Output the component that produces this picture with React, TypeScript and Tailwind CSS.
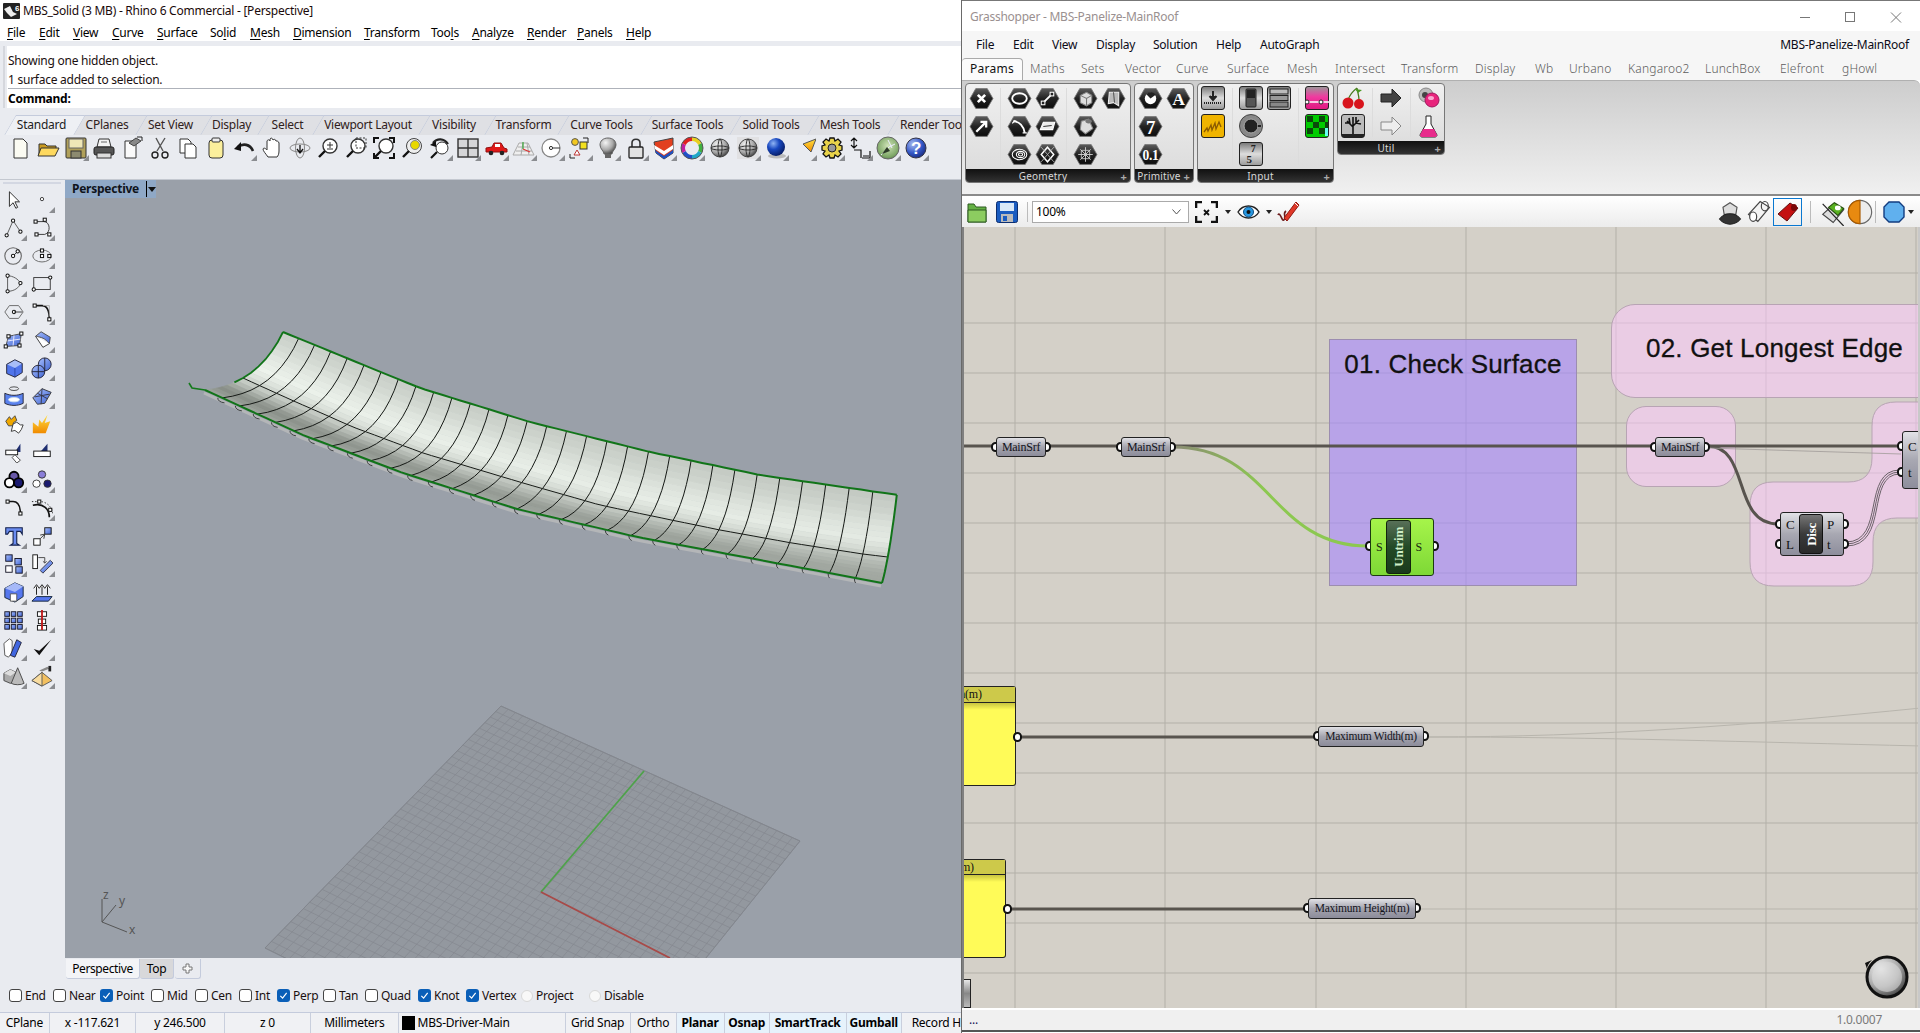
import React from 'react';

const ui = "font-['Noto_Sans','Open_Sans',sans-serif] tracking-[-0.25px]";
const serif = "font-['Liberation_Serif',serif]";

type Pt = [number, number];

// ---- rhino surface maths ----
const topPts: Pt[] = [[283, 332], [420, 388], [530, 422], [650, 452], [760, 475], [898, 495]];
const midPts: Pt[] = [[243, 378], [287, 398], [353, 427], [423, 453], [523, 483], [600, 505], [652, 516], [720, 530], [792, 543], [863, 554], [888, 557]];
const botPts: Pt[] = [[205, 390], [303, 435], [403, 473], [517, 509], [637, 537], [760, 560], [882, 583]];
const RIBS = 31;

const yAt = (pts: Pt[], x: number) => {
  for (let i = 0; i < pts.length - 1; i++) {
    if (x <= pts[i + 1][0]) {
      const t = (x - pts[i][0]) / (pts[i + 1][0] - pts[i][0]);
      return pts[i][1] + (pts[i + 1][1] - pts[i][1]) * t;
    }
  }
  return pts[pts.length - 1][1];
};

const topAt = (i: number): Pt => {
  const x = 283 + 15.5 * i + (4.3 * i * i) / RIBS;
  return [x, yAt(topPts, x)];
};
const midAt = (i: number): Pt => {
  const x = 243 + 16.5 * i + (4.3 * i * i) / RIBS;
  return [x, yAt(midPts, x)];
};
const botAt = (i: number): Pt => {
  const x = 205 + 17 * i + (4.84 * i * i) / RIBS;
  return [x, yAt(botPts, x)];
};

const surf = (i: number, v: number): Pt => {
  const T = topAt(i);
  const M = midAt(i);
  const B = botAt(i);
  const c = (k: 0 | 1) => (M[k] - 0.16 * T[k] - 0.36 * B[k]) / 0.48;
  const w0 = (1 - v) * (1 - v);
  const w1 = 2 * v * (1 - v);
  const w2 = v * v;
  return [w0 * T[0] + w1 * c(0) + w2 * B[0], w0 * T[1] + w1 * c(1) + w2 * B[1]];
};

const shade = (u: number, v: number) => {
  // bright band drifts towards the top edge on the far end
  const stops: Pt[] = [[0, 205], [0.12, 214], [0.28, 232], [0.42, 240], [0.55, 222], [0.66, 196], [0.84, 138 + 38 * u], [1, 164 + 8 * u]];
  let g = 200;
  for (let k = 0; k < stops.length - 1; k++) {
    if (v <= stops[k + 1][0]) {
      g = stops[k][1] + ((stops[k + 1][1] - stops[k][1]) * (v - stops[k][0])) / (stops[k + 1][0] - stops[k][0]);
      break;
    }
  }
  g = g - 8 * u;
  return `rgb(${Math.round(g - 4)},${Math.round(g + 2)},${Math.round(g - 5)})`;
};

const toPath = (pts: Pt[]) => pts.map((p, i) => `${i ? 'L' : 'M'}${p[0].toFixed(1)} ${p[1].toFixed(1)}`).join(' ');

const Surface = () => {
  const quads: React.ReactNode[] = [];
  const steps = 18;
  for (let i = 0; i < RIBS; i++) {
    for (let j = 0; j < steps; j++) {
      const a = surf(i, j / steps);
      const b = surf(i + 1, j / steps);
      const c = surf(i + 1, (j + 1) / steps);
      const d = surf(i, (j + 1) / steps);
      const col = shade(i / RIBS, (j + 0.5) / steps);
      quads.push(<path key={`${i}-${j}`} d={toPath([a, b, c, d]) + 'Z'} fill={col} stroke={col} strokeWidth={0.6} />);
    }
  }
  const ribs: string[] = [];
  for (let i = 1; i < RIBS; i++) {
    const pts: Pt[] = [];
    for (let v = 0; v <= 10; v++) pts.push(surf(i, v / 10));
    ribs.push(toPath(pts));
  }
  const long: Pt[] = [];
  const top: Pt[] = [];
  const bot: Pt[] = [];
  for (let i = 0; i <= RIBS; i += 0.5) {
    long.push(midAt(i));
    top.push(topAt(i));
    bot.push(botAt(i));
  }
  const left: Pt[] = [];
  const right: Pt[] = [];
  for (let v = 0; v <= 10; v++) {
    left.push(surf(0, v / 10));
    right.push(surf(RIBS, v / 10));
  }
  const hooks: string[] = [];
  for (let i = 1; i < RIBS; i++) {
    const [x, y] = botAt(i);
    const k = 3.5 * (1 - i / RIBS);
    hooks.push(`M${x - 1 - k} ${y} Q${x - 1 - k} ${y + 4} ${x + k * 0.7} ${y + 5}`);
  }
  return (
    <g fill="none">
      <path d={toPath(bot.map((p) => [p[0] - 1, p[1] + 3] as Pt))} stroke="#b4b6b8" strokeWidth={3} />
      {hooks.map((d, i) => <path key={i} d={d} stroke="#3c3f41" strokeWidth={1} />)}
      {quads}
      {ribs.map((d, i) => <path key={i} d={d} stroke="#161a16" strokeWidth={1} />)}
      <path d={toPath(long)} stroke="#161a16" strokeWidth={1} />
      <path d="M189 383 L192 388 L205 390" stroke="#147a1c" strokeWidth={1.6} />
      <path d={toPath(top)} stroke="#117419" strokeWidth={2} />
      <path d={toPath(bot)} stroke="#117419" strokeWidth={2} />
      <path d={toPath(left.slice(0, 8))} stroke="#117419" strokeWidth={1.8} />
      <path d={toPath(right)} stroke="#117419" strokeWidth={2} />
    </g>
  );
};

const CPlaneGrid = () => {
  const [x0, y0, x1, y1, x2, y2, x3, y3] = [501, 706, 800, 841, 587, 1106, 265, 948];
  const dx1 = x1 - x2, dx2 = x3 - x2, dx3 = x0 - x1 + x2 - x3;
  const dy1 = y1 - y2, dy2 = y3 - y2, dy3 = y0 - y1 + y2 - y3;
  const det = dx1 * dy2 - dx2 * dy1;
  const g = (dx3 * dy2 - dx2 * dy3) / det;
  const h = (dx1 * dy3 - dx3 * dy1) / det;
  const a = x1 - x0 + g * x1, b = x3 - x0 + h * x3;
  const d = y1 - y0 + g * y1, e = y3 - y0 + h * y3;
  const map = (s: number, t: number): Pt => {
    const w = g * s + h * t + 1;
    return [(a * s + b * t + x0) / w, (d * s + e * t + y0) / w];
  };
  const lines: string[] = [];
  for (let i = 0; i <= 40; i++) {
    lines.push(toPath([map(i / 40, 0), map(i / 40, 1)]));
    lines.push(toPath([map(0, i / 40), map(1, i / 40)]));
  }
  return (
    <g>
      <path d={toPath([map(0, 0), map(1, 0), map(1, 1), map(0, 1)]) + 'Z'} fill="#93989f" stroke="#7d8188" strokeWidth={0.8} />
      {lines.map((l, i) => <path key={i} d={l} fill="none" stroke="#83878e" strokeWidth={0.65} />)}
      <path d="M541 892 L644 771" stroke="#4ea24a" strokeWidth={1.8} />
      <path d="M541 892 L670 958" stroke="#a84a48" strokeWidth={1.8} />
    </g>
  );
};

// ---- icon helpers ----
const Svg = ({ s = 24, children }: { s?: number; children: React.ReactNode }) => (
  <svg width={s} height={s} viewBox="0 0 24 24" className="block">{children}</svg>
);

const Corner = () => (
  <span className="absolute bottom-[1px] right-[1px] w-0 h-0 border-l-[6px] border-l-transparent border-b-[6px] border-b-[#8b8d91]" />
);

const Defs = () => (
  <svg className="absolute w-0 h-0">
    <defs>
      <radialGradient id="ball" cx="35%" cy="30%" r="75%"><stop offset="0" stopColor="#f4f4f4" /><stop offset="0.6" stopColor="#a8a8a8" /><stop offset="1" stopColor="#404040" /></radialGradient>
      <radialGradient id="blueball" cx="35%" cy="30%" r="75%"><stop offset="0" stopColor="#8fb4f4" /><stop offset="0.45" stopColor="#1848c0" /><stop offset="1" stopColor="#061a60" /></radialGradient>
      <radialGradient id="greenball" cx="50%" cy="40%" r="70%"><stop offset="0" stopColor="#cfe3b8" /><stop offset="0.7" stopColor="#7fa868" /><stop offset="1" stopColor="#4d6d45" /></radialGradient>
      <radialGradient id="helpball" cx="35%" cy="30%" r="75%"><stop offset="0" stopColor="#a8bcf0" /><stop offset="0.6" stopColor="#3458c8" /><stop offset="1" stopColor="#1a2c80" /></radialGradient>
      <linearGradient id="hex" x1="0" y1="0" x2="0" y2="1"><stop offset="0" stopColor="#5a5a5a" /><stop offset="0.5" stopColor="#222" /><stop offset="1" stopColor="#0c0c0c" /></linearGradient>
      <linearGradient id="blue" x1="0" y1="0" x2="1" y2="1"><stop offset="0" stopColor="#a8c0ff" /><stop offset="1" stopColor="#3f63d0" /></linearGradient>
      <linearGradient id="sq" x1="0" y1="0" x2="0" y2="1"><stop offset="0" stopColor="#777" /><stop offset="0.5" stopColor="#ddd" /><stop offset="1" stopColor="#999" /></linearGradient>
      <linearGradient id="pink" x1="0" y1="0" x2="0" y2="1"><stop offset="0" stopColor="#999" /><stop offset="0.45" stopColor="#f03aa0" /><stop offset="1" stopColor="#e01880" /></linearGradient>
      <linearGradient id="org" x1="0" y1="0" x2="0" y2="1"><stop offset="0" stopColor="#ffe040" /><stop offset="1" stopColor="#f08a00" /></linearGradient>
      <linearGradient id="wireGreen" gradientUnits="userSpaceOnUse" x1="1172" y1="0" x2="1262" y2="0"><stop offset="0" stopColor="#8a8a74" /><stop offset="1" stopColor="#8cc850" /></linearGradient>
    </defs>
  </svg>
);

const Mag = ({ children }: { children?: React.ReactNode }) => (
  <>
    <circle cx="14" cy="10" r="7" fill="#fff" stroke="#333" strokeWidth="1.4" />
    <path d="M9 15 L3 21" stroke="#111" strokeWidth="2.4" />
    {children}
  </>
);

const Sphere = () => (
  <>
    <circle cx="12" cy="12" r="9" fill="url(#ball)" stroke="#444" />
    <ellipse cx="12" cy="12" rx="9" ry="2" fill="none" stroke="#333" />
    <ellipse cx="12" cy="12" rx="2" ry="9" fill="none" stroke="#333" />
  </>
);

const topIcons: Record<string, React.ReactNode> = {
  newf: <path d="M6 3h9l4 4v15H6z" fill="#fbfbf2" stroke="#333" />,
  open: <><path d="M3 20V8h6l2 2h9v3" fill="#c99a20" stroke="#333" /><path d="M2 20l3-8h18l-4 8z" fill="#fdd85e" stroke="#333" /></>,
  save: <><rect x="2" y="2" width="20" height="20" rx="1" fill="#b0a05a" stroke="#333" /><rect x="5" y="3" width="14" height="9" fill="#efe7b6" stroke="#666" /><rect x="7" y="15" width="10" height="7" fill="#8c8a70" stroke="#333" /></>,
  print: <><path d="M7 3h10l2 8H5z" fill="#f2f2f2" stroke="#333" /><rect x="2" y="11" width="20" height="8" rx="2" fill="#555" stroke="#222" /><rect x="5" y="17" width="14" height="5" fill="#ddd" stroke="#333" /><path d="M9 6h6" stroke="#666" /></>,
  props: <><path d="M5 5h11v17H5z" fill="#fafafa" stroke="#333" /><path d="M9 7 L16 2 L21 5 L14 10z" fill="#888" stroke="#444" /><path d="M17 1h5v4" fill="none" stroke="#222" /></>,
  cut: <><path d="M8 2 L15 15 M17 2 L9 15" stroke="#555" strokeWidth="1.4" fill="none" /><circle cx="7" cy="19" r="3" fill="none" stroke="#222" strokeWidth="1.4" /><circle cx="17" cy="19" r="3" fill="none" stroke="#222" strokeWidth="1.4" /></>,
  copy: <><path d="M4 3h8l3 3v11H4z" fill="#fff" stroke="#333" /><path d="M9 8h8l3 3v11H9z" fill="#fff" stroke="#333" /></>,
  paste: <><rect x="5" y="4" width="14" height="18" rx="3" fill="#fbef9c" stroke="#333" /><rect x="8" y="2" width="8" height="4" rx="1" fill="#eee" stroke="#333" /></>,
  undo: <><path d="M21 15 C18 8 11 7 6 11" fill="none" stroke="#222" strokeWidth="2.6" /><path d="M2 13 L9 6 L9 15z" fill="#111" /></>,
  pan: <path d="M8 21 C6 18 3 15 3 13 C4 11 6 13 7 14 V5 C8 3 9.5 4 10 5 V3 C11 1.5 12.5 2 13 4 C14 3 15.5 3 16 5 C17 5 18.5 5 19 7 V15 C19 18 18 20 17 21z" fill="#fff" stroke="#333" />,
  orbit: <><ellipse cx="12" cy="12" rx="4.5" ry="10" fill="none" stroke="#888" /><ellipse cx="12" cy="12" rx="10" ry="4" fill="none" stroke="#888" /><path d="M12 9v7M9 13l3 4 3-4" stroke="#111" fill="none" strokeWidth="1.3" /></>,
  zoomin: <Mag><path d="M11 9h6M14 6v6M11 13h6" stroke="#333" /></Mag>,
  zoomwin: <><Mag /><rect x="12" y="2" width="10" height="10" fill="none" stroke="#333" strokeDasharray="2 1.5" /></>,
  zoomext: <><Mag /><path d="M2 7V2h5M17 2h5v5M22 17v5h-5M7 22H2v-5" fill="none" stroke="#111" strokeWidth="2" /></>,
  zoomsel: <><circle cx="14" cy="10" r="7.5" fill="#eee" stroke="#444" /><circle cx="15" cy="9" r="4.5" fill="#e8d800" stroke="#888" /><path d="M9 15 L3 21" stroke="#111" strokeWidth="2.4" /></>,
  zoomback: <><circle cx="14" cy="12" r="6" fill="#fff" stroke="#333" /><path d="M9 16 L3 22" stroke="#111" strokeWidth="2.2" /><path d="M20 8 C16 2 9 2 5 7" fill="none" stroke="#222" strokeWidth="2.2" /><path d="M2 9l6-4 0 6z" fill="#111" /></>,
  four: <><rect x="2" y="3" width="20" height="18" fill="#d6d6d8" stroke="#333" strokeWidth="1.4" /><path d="M12 3v18M2 12h20" stroke="#333" strokeWidth="1.4" /></>,
  car: <><path d="M2 16v-4l6-1 2-4h7l3 5 3 1v3z" fill="#e01818" stroke="#901010" /><rect x="11" y="8" width="5" height="3" fill="#fff" /><circle cx="7" cy="17" r="2.3" fill="#222" /><circle cx="18" cy="17" r="2.3" fill="#222" /></>,
  cplane: <><path d="M7 7h9l6 12H1z" fill="#efefef" stroke="#aaa" /><path d="M6 11h12M4 15h16M11 7l-2 12M15 7l2 12" stroke="#aaa" /><path d="M11 13V6" stroke="#4a4" strokeWidth="1.3" /><path d="M11 13l7 3" stroke="#d33" strokeWidth="1.3" /></>,
  circ: <><circle cx="11" cy="12" r="9" fill="#fff" stroke="#888" strokeWidth="1.3" /><circle cx="11" cy="12" r="1.6" fill="#fff" stroke="#333" /><path d="M13 12h7" stroke="#333" /></>,
  shapes: <><path d="M15 2h5v5M2 18v4h5" fill="none" stroke="#222" /><circle cx="7" cy="6" r="3.4" fill="#f2c820" stroke="#555" /><rect x="12" y="6" width="7" height="7" fill="#f2e020" stroke="#333" /><path d="M9 14l3 5H6z" fill="#fff" stroke="#b33" /></>,
  bulb: <><path d="M12 2c5 0 8 3 8 7s-4 6-4 9H8c0-3-4-5-4-9s3-7 8-7z" fill="url(#ball)" stroke="#666" /><rect x="9" y="18" width="6" height="4" fill="#666" /></>,
  lock: <><path d="M8 11V7c0-5 8-5 8 0v4" fill="none" stroke="#333" strokeWidth="1.6" /><rect x="5" y="11" width="14" height="11" rx="1" fill="#e2e2e2" stroke="#222" strokeWidth="1.3" /></>,
  paint: <><path d="M2 6 L21 2 V17 L12 23 L4 17z" fill="#e24020" stroke="#444" /><path d="M2 9 L12 15 L21 9 V13 L12 19 L3 13z" fill="#fff" /><path d="M3 14 L12 20 L21 14 V17 L12 23 L4 17z" fill="#2050c0" /></>,
  wheel: <><path d="M12 3a9 9 0 0 1 8 5" fill="none" stroke="#e8d020" strokeWidth="4" /><path d="M20 8a9 9 0 0 1 0 8" fill="none" stroke="#40b040" strokeWidth="4" /><path d="M20 16a9 9 0 0 1-8 5" fill="none" stroke="#20a8c8" strokeWidth="4" /><path d="M12 21a9 9 0 0 1-8-5" fill="none" stroke="#2050c8" strokeWidth="4" /><path d="M4 16a9 9 0 0 1 0-8" fill="none" stroke="#c020a0" strokeWidth="4" /><path d="M4 8a9 9 0 0 1 8-5" fill="none" stroke="#e02020" strokeWidth="4" /><circle cx="12" cy="12" r="11" fill="none" stroke="#555" /></>,
  sphere: <Sphere />,
  spheregrid: <><rect x="1" y="1" width="22" height="22" fill="#ddd" opacity="0.7" /><Sphere /></>,
  bluesphere: <><ellipse cx="13" cy="20" rx="9" ry="2.5" fill="#bbb" /><circle cx="12" cy="11" r="9" fill="url(#blueball)" /></>,
  cone: <path d="M11 8 L24 3 L19 16z" fill="url(#org)" stroke="#555" />,
  gear: <><path d="M10 2h4l1 3 3-2 3 3-2 3 3 1v4l-3 1 2 3-3 3-3-2-1 3h-4l-1-3-3 2-3-3 2-3-3-1v-4l3-1-2-3 3-3 3 2z" fill="#e8d24a" stroke="#111" strokeWidth="1.3" /><circle cx="12" cy="12" r="4" fill="#999" stroke="#222" /></>,
  dim: <path d="M6 2v10M3 5l3-3 3 3M3 9l3 3 3-3M6 14h7v8M13 14l0 0M14 22h8v-7M15 20h6" fill="none" stroke="#111" strokeWidth="1.2" />,
  greenb: <><circle cx="12" cy="12" r="11" fill="url(#greenball)" stroke="#666" /><path d="M5 19 L13 11 L19 8 M12 4 L16 12" stroke="#eef" fill="none" /><path d="M6 18 L11 11 L14 15 Z" fill="#2c3a28" /></>,
  help: <><circle cx="12" cy="12" r="10" fill="url(#helpball)" stroke="#334" /><text x="12" y="18" textAnchor="middle" fontSize="17" fontWeight="700" fontFamily="Liberation Sans" fill="#fff">?</text></>,
};

const topRow: [string, boolean][] = [
  ['newf', false], ['open', false], ['save', true], ['print', false], ['props', false], ['cut', false], ['copy', false], ['paste', false],
  ['undo', true], ['pan', false], ['orbit', false], ['zoomin', false], ['zoomwin', false], ['zoomext', false], ['zoomsel', false], ['zoomback', true],
  ['four', true], ['car', true], ['cplane', true], ['circ', true], ['shapes', true], ['bulb', true], ['lock', true], ['paint', true], ['wheel', true],
  ['sphere', false], ['spheregrid', true], ['bluesphere', true], ['cone', true], ['gear', true], ['dim', true], ['greenb', true], ['help', true],
];

const node = (x: number, y: number, r = 1.8) => <circle cx={x} cy={y} r={r} fill="#fff" stroke="#111" strokeWidth="1.1" />;
const sq = (x: number, y: number, s = 3.4) => <rect x={x - s / 2} y={y - s / 2} width={s} height={s} fill="#fff" stroke="#111" strokeWidth="1.1" />;

const leftIcons: React.ReactNode[] = [
  <path d="M7 3 L7 19 L11 15 L14 21 L16 20 L13 14 L18 14z" fill="#fff" stroke="#222" />,
  <circle cx="12" cy="11" r="1.8" fill="#fff" stroke="#333" />,
  <><path d="M4 20 L11 4 L19 16" fill="none" stroke="#555" />{node(4, 20)}{node(11, 4)}{node(19, 16)}</>,
  <><path d="M6 5h8c7 0 8 12 1 14H6" fill="none" stroke="#333" />{sq(5, 5)}{sq(15, 3)}{sq(20, 19)}{sq(6, 19)}</>,
  <><circle cx="11" cy="12" r="9" fill="none" stroke="#666" strokeWidth="1.2" /><path d="M11 12l5-5" stroke="#222" />{node(11, 12)}{node(16, 7)}</>,
  <><ellipse cx="12" cy="12" rx="10" ry="6.5" fill="none" stroke="#666" />{sq(12, 12)}{sq(20, 12)}{sq(12, 6)}</>,
  <><path d="M5 3 L5 20 C12 20 18 16 19 11 C17 7 11 3 5 3z" fill="none" stroke="#555" />{node(5, 3)}{node(5, 20)}{node(19, 11)}</>,
  <><rect x="3" y="5" width="18" height="13" fill="none" stroke="#333" />{node(3, 18)}{node(21, 5)}</>,
  <><path d="M7 5h10l5 7-5 7H7l-5-7z" fill="none" stroke="#666" />{node(12, 12)}<path d="M12 12h9" stroke="#333" /></>,
  <><path d="M4 5h8c5 0 8 5 8 15" fill="none" stroke="#111" strokeWidth="1.8" /><path d="M13 5h7v12" fill="none" stroke="#aaa" />{sq(4, 5)}{sq(20, 20)}</>,
  <><path d="M6 8 L20 5 L18 18 L3 19z" fill="url(#blue)" stroke="#444" /><path d="M12 7 L11 18 M5 13 L19 11" stroke="#eef" />{sq(6, 8)}{sq(20, 5)}{sq(18, 18)}{sq(3, 19)}</>,
  <><path d="M5 8 L11 3 L21 9 L20 16 C15 10 12 9 5 8z" fill="url(#blue)" stroke="#444" /><path d="M5 8 L13 20 L20 16" fill="#fff" stroke="#333" /></>,
  <><path d="M4 8 L13 3 L21 7 V17 L13 22 L4 18z" fill="#4f74ea" /><path d="M4 8 L13 12 L21 7 L13 3z" fill="#a8bdf8" /><path d="M13 12V22" stroke="#2c46a8" /><path d="M4 8 L13 3 L21 7 V17 L13 22 L4 18z" fill="none" stroke="#223" /></>,
  <><circle cx="15" cy="8" r="7" fill="url(#blue)" stroke="#223" /><circle cx="8" cy="16" r="7" fill="url(#blue)" stroke="#223" /><path d="M8 9v14M1 16h14M15 1v14" stroke="#223" fill="none" /></>,
  <><ellipse cx="12" cy="4" rx="5" ry="2" fill="none" stroke="#444" /><path d="M2 9c6 3 14 3 20 0v11c-6 3-14 3-20 0z" fill="#5a82ee" stroke="#223" /><ellipse cx="12" cy="16" rx="6" ry="2.4" fill="#fff" stroke="#cde" /></>,
  <><path d="M2 14 L12 4 L22 8 L15 20 L7 21z" fill="url(#blue)" stroke="#333" /><path d="M7 9 L18 15 M12 4 L11 21 M4 13 L20 10" stroke="#334" fill="none" /></>,
  <><path d="M3 9 L7 4 L9 7 L13 3 L15 8 L11 11 L12 14 L6 14z" fill="#f0a800" stroke="#444" /><path d="M11 12 L15 10 L19 13 L22 13 L20 18 L17 22 L13 19 L9 20z" fill="#fff" stroke="#333" /></>,
  <path d="M18 2 L15 11 L21 9 L16 22 L2 22 V10 L8 15 L9 7 L12 11z" fill="url(#org)" />,
  <><path d="M13 12 L19 3 V12z" fill="#1f2e70" /><rect x="3" y="10" width="13" height="5" fill="#fff" stroke="#111" /><path d="M13 15 L19 21 L15 24 L10 18z" fill="#fff" stroke="#444" /></>,
  <><path d="M11 11 L18 3 V11z" fill="#1f2e70" /><rect x="3" y="11" width="18" height="6" fill="#fff" stroke="#111" /></>,
  <><circle cx="12" cy="8" r="5" fill="#6858a8" stroke="#000" strokeWidth="2" /><circle cx="7" cy="15" r="5" fill="#fff" stroke="#000" strokeWidth="2" /><circle cx="17" cy="15" r="5" fill="#1a1a70" stroke="#000" strokeWidth="2" /></>,
  <><circle cx="12" cy="6" r="4" fill="#8a7ed8" stroke="#333" /><circle cx="6" cy="16" r="4" fill="#fff" stroke="#333" /><circle cx="18" cy="16" r="4" fill="#1a1a70" stroke="#333" /></>,
  <><path d="M5 5h6c6 0 8 7 8 14" fill="none" stroke="#111" strokeWidth="1.6" />{sq(5, 5)}{sq(19, 18)}</>,
  <><path d="M2 9 C14 6 20 14 20 22" fill="none" stroke="#111" strokeWidth="1.8" /><path d="M1 5h10 c8 1 13 8 13 15" fill="none" stroke="#222" strokeDasharray="1.5 2" />{sq(9, 5)}{sq(21, 14)}</>,
  <path d="M3 3h18v7l-2-3h-4l0 13 3 2H8l3-2 0-13H7l-2 3H3z" fill="#6a8cf0" stroke="#16224c" strokeWidth="1.2" />,
  <><rect x="3" y="15" width="7" height="7" fill="#fff" stroke="#111" /><rect x="15" y="3" width="7" height="7" fill="url(#blue)" stroke="#111" /><path d="M10 15l5-5M10 11l5-1-1 5" fill="none" stroke="#333" /></>,
  <><rect x="3" y="2" width="7" height="7" fill="url(#blue)" stroke="#112" /><rect x="13" y="6" width="7" height="7" fill="url(#blue)" stroke="#112" /><rect x="3" y="14" width="7" height="7" fill="#fff" stroke="#112" /><rect x="14" y="15" width="7" height="7" fill="url(#blue)" stroke="#112" /></>,
  <><rect x="2" y="2" width="5" height="15" fill="#fff" stroke="#111" /><path d="M10 19 L21 8 L24 11 L13 22z" fill="url(#blue)" stroke="#334" /><path d="M8 5h7v6M13 9l2 2 2-2" fill="none" stroke="#444" /></>,
  <><path d="M2 8 L13 2 L22 6 V17 L13 23 L2 18z" fill="#5577ee" stroke="#123" /><path d="M2 8 L13 12 L22 6 L13 2z" fill="#a6b9f8" /><path d="M8 22 V14 H15 V22z" fill="#fff" stroke="#555" /></>,
  <><path d="M1 22 L6 17 H23 L19 22z" fill="#5577ee" stroke="#123" /><path d="M6 15V6M3 8l3-4 3 4M12 15V6M9 8l3-4 3 4M18 15V6M15 8l3-4 3 4" fill="#fff" stroke="#111" /></>,
  <>{[3, 10, 17].map((y) => [2, 9, 16].map((x) => <rect key={`${x}${y}`} x={x} y={y} width="5" height="5" fill="url(#blue)" stroke="#112" />))}</>,
  <><rect x="7" y="3" width="10" height="5" fill="#fff" stroke="#111" /><rect x="8" y="11" width="8" height="5" fill="#fff" stroke="#111" /><rect x="7" y="18" width="10" height="5" fill="#fff" stroke="#111" /><path d="M12 1v22" stroke="#c01818" strokeWidth="2" /></>,
  <><path d="M1 7 L7 2 L10 4 V17 L6 22 L2 20z" fill="#fff" stroke="#555" /><path d="M8 20 L15 3 L20 6 L13 22z" fill="#4066e0" stroke="#223" /></>,
  <path d="M3 13 L9 20 L22 3 L9 15z" fill="#111" />,
  <><path d="M1 9 L8 5 L14 8 V17 L8 20 L1 17z" fill="#aaa" stroke="#444" /><path d="M1 9 L8 12 L14 8 L8 5z" fill="#ddd" /><path d="M16 3 L23 20 C20 22 12 22 9 20z" fill="#bbb" stroke="#444" /></>,
  <><path d="M12 8 L23 17 L12 23 L1 17z" fill="#f2c060" stroke="#555" /><path d="M12 8 L12 23 L1 17z" fill="#f8dca0" stroke="#555" /><path d="M9 6 L18 2 L20 4 L12 7z" fill="#888" /><rect x="19" y="1" width="3" height="6" fill="#222" /></>,
];
const leftCorner = [0, 1, 1, 1, 1, 1, 1, 1, 1, 1, 0, 1, 1, 1, 1, 1, 0, 0, 0, 0, 1, 1, 0, 1, 1, 1, 1, 1, 1, 1, 1, 1, 1, 1, 1, 1];

// ---- rhino side ----
const Ul = ({ t, i }: { t: string; i: number }) => (
  <>{t.slice(0, i)}<span className="underline underline-offset-[2px]">{t[i]}</span>{t.slice(i + 1)}</>
);

const rhinoMenu: [string, number, string][] = [
  ['File', 0, 'w-[32px]'], ['Edit', 0, 'w-[34px]'], ['View', 0, 'w-[39px]'], ['Curve', 0, 'w-[45px]'], ['Surface', 0, 'w-[53px]'], ['Solid', 2, 'w-[40px]'], ['Mesh', 0, 'w-[43px]'],
  ['Dimension', 0, 'w-[71px]'], ['Transform', 0, 'w-[67px]'], ['Tools', 3, 'w-[41px]'], ['Analyze', 0, 'w-[55px]'], ['Render', 0, 'w-[50px]'], ['Panels', 0, 'w-[49px]'], ['Help', 0, 'w-[40px]'],
];

const rhinoTabs: [string, string][] = [
  ['Standard', 'w-[69px]'], ['CPlanes', 'w-[62px]'], ['Set View', 'w-[65px]'], ['Display', 'w-[57px]'], ['Select', 'w-[55px]'], ['Viewport Layout', 'w-[106px]'], ['Visibility', 'w-[66px]'],
  ['Transform', 'w-[73px]'], ['Curve Tools', 'w-[83px]'], ['Surface Tools', 'w-[89px]'], ['Solid Tools', 'w-[78px]'], ['Mesh Tools', 'w-[80px]'], ['Render Tools', 'w-[90px]'],
];

const osnaps: [string, number, string][] = [
  ['End', 0, 'w-[44px]'], ['Near', 0, 'w-[47px]'], ['Point', 1, 'w-[51px]'], ['Mid', 0, 'w-[44px]'], ['Cen', 0, 'w-[44px]'], ['Int', 0, 'w-[38px]'], ['Perp', 1, 'w-[46px]'],
  ['Tan', 0, 'w-[42px]'], ['Quad', 0, 'w-[53px]'], ['Knot', 1, 'w-[48px]'], ['Vertex', 1, 'w-[55px]'], ['Project', 2, 'w-[68px]'], ['Disable', 2, 'w-[70px]'],
];

const statusCells: [string, string][] = [
  ['CPlane', 'w-[50px]'], ['x -117.621', 'w-[87px]'], ['y 246.500', 'w-[89px]'], ['z 0', 'w-[87px]'], ['Millimeters', 'w-[88px]'],
];
const statusToggles: [string, string, boolean][] = [
  ['Grid Snap', 'w-[65px]', false], ['Ortho', 'w-[46px]', false], ['Planar', 'w-[48px]', true], ['Osnap', 'w-[45px]', true], ['SmartTrack', 'w-[77px]', true], ['Gumball', 'w-[55px]', true],
];

const OsnapBox = ({ state }: { state: number }) => {
  if (state === 2) return <span className="w-[12px] h-[12px] rounded-full bg-[#f8f8f8] border border-[#d8d8d8]" />;
  if (state === 1) {
    return (
      <span className="w-[13px] h-[13px] rounded-[3px] bg-[#0a5fb8] flex items-center justify-center">
        <svg width="9" height="9" viewBox="0 0 10 10"><path d="M1.5 5.5 L4 8 L8.5 2" fill="none" stroke="#fff" strokeWidth="1.3" /></svg>
      </span>
    );
  }
  return <span className="w-[13px] h-[13px] rounded-[3px] bg-white border border-[#444]" />;
};

const RhinoWindow = () => (
  <div className={`${ui} w-[961px] h-[1033px] flex flex-col bg-[#e9ebf0] text-[12px] text-black overflow-hidden`}>
    <div className="h-[22px] bg-white flex items-center pl-[3px]">
      <svg width="17" height="16" viewBox="0 0 17 16"><rect width="17" height="16" rx="1" fill="#222" /><path d="M1 6 L7 3 L10 9 L14 11 L8 14 L4 10z" fill="#eee" /><text x="12" y="8" fontSize="8" fill="#fff" fontWeight="700" fontFamily="Liberation Sans">6</text></svg>
      <span className="ml-[3px] text-[#1a0a0a]">MBS_Solid (3 MB) - Rhino 6 Commercial - [Perspective]</span>
    </div>
    <div className="h-[19px] bg-white flex items-center pl-[7px] pt-[2px]">
      {rhinoMenu.map(([t, i, w]) => <span key={t} className={w}><Ul t={t} i={i} /></span>)}
    </div>
    <div className="h-[5px]" />
    <div className="h-[62px] flex">
      <div className="w-[7px] border-l-2 border-[#d5d7dd] ml-[3px] mr-[-3px]" />
      <div className="flex-1 bg-white flex flex-col pl-[1px] text-[#1a1010]">
        <div className="h-[43px] pt-[6px] flex flex-col gap-[2px] border-b border-[#aeb2ba]">
          <span className="leading-[17px]">Showing one hidden object.</span>
          <span className="leading-[17px]">1 surface added to selection.</span>
        </div>
        <div className="flex-1 flex items-center font-bold text-black">Command:</div>
      </div>
    </div>
    <div className="h-[7px]" />
    <div className="h-[20px] flex pl-[7px] overflow-hidden">
      {rhinoTabs.map(([t, w], i) => (
        <div key={t} className={`${w} relative h-[20px] flex items-center justify-center shrink-0`}>
          <span className={`absolute top-0 bottom-0 left-[3px] right-[-6px] -skew-x-[30deg] rounded-tr-[4px] border-l border-t border-[#c4cbdc] ${i === 0 ? 'bg-[#eef0f4]' : 'bg-[#dfe0e4]'}`} />
          <span className={`relative whitespace-nowrap ${i === 0 ? 'text-[#222]' : 'text-[#302020]'}`}>{t}</span>
        </div>
      ))}
    </div>
    <div className="h-[45px] border-b border-[#c4c8d0] flex pl-[6px] relative">
      {topRow.map(([name, c]) => (
        <div key={name} className="relative w-[28px] h-[28px] flex items-center justify-center -mt-[1px]">
          <Svg>{topIcons[name]}</Svg>
          {c && <Corner />}
        </div>
      ))}
    </div>
    <div className="h-[800px] flex">
      <div className="w-[64px] mr-[1px] shrink-0">
        <div className="h-[4px] mx-[3px] mt-[2px] border-t-2 border-[#d3d7e2]" />
        <div className="grid grid-cols-[28px_28px] auto-rows-[28px]">
          {leftIcons.map((ic, i) => (
            <div key={i} className="relative flex items-center justify-center">
              <Svg s={22}>{ic}</Svg>
              {leftCorner[i] === 1 && <Corner />}
            </div>
          ))}
        </div>
      </div>
      <div className="flex-1 flex flex-col">
        <div className="h-[778px] relative bg-[#9aa0a9] overflow-hidden">
          <svg width="896" height="778" viewBox="65 180 896 778" className="block">
            <CPlaneGrid />
            <Surface />
            <path d="M102 922 L102 899 M102 922 L116 905 M102 922 L127 932" stroke="#555" fill="none" />
            <text x="103" y="899" fontSize="12" fill="#555" fontFamily="Noto Sans">z</text>
            <text x="119" y="905" fontSize="12" fill="#555" fontFamily="Noto Sans">y</text>
            <text x="129" y="934" fontSize="12" fill="#555" fontFamily="Noto Sans">x</text>
          </svg>
          <div className="absolute left-0 top-0 w-[91px] h-[18px] bg-[#8fa8c6] flex items-center font-bold text-[#10141c] pl-[7px]">
            Perspective
            <span className="absolute left-[81px] top-[1px] h-[16px] w-px bg-black" />
            <svg className="absolute left-[83px] top-[7px]" width="8" height="5" viewBox="0 0 8 5"><path d="M0 0h8L4 5z" fill="#111" /></svg>
          </div>
        </div>
        <div className="h-[22px] flex pl-[1px]">
          <div className="w-[74px] h-[20px] mt-[1px] bg-[#f3f4f7] border-b border-r border-[#c4cbdc] rounded-b-[3px] flex items-center justify-center tracking-[-0.4px]">Perspective</div>
          <div className="w-[34px] h-[20px] mt-[1px] bg-[#d8d8da] border-b border-r border-[#c4cbdc] rounded-b-[3px] flex items-center justify-center">Top</div>
          <div className="w-[26px] h-[20px] mt-[1px] ml-[1px] border-b border-r border-[#c4cbdc] rounded-b-[3px] flex items-center justify-center">
            <svg width="11" height="11" viewBox="0 0 11 11"><path d="M4 1h3v3h3v3H7v3H4V7H1V4h3z" fill="#f8f8f8" stroke="#777" /></svg>
          </div>
        </div>
      </div>
    </div>
    <div className="h-[3px]" />
    <div className="h-[25px] flex items-center pl-[9px]">
      {osnaps.map(([t, s, w]) => (
        <div key={t} className={`${w} flex items-center gap-[3px]`}><OsnapBox state={s} /><span className="text-[#1a1010]">{t}</span></div>
      ))}
    </div>
    <div className="h-[4px]" />
    <div className="h-[21px] flex border-t border-[#c4cbdc] bg-[#f0f1f4] overflow-hidden">
      {statusCells.map(([t, w]) => (
        <div key={t} className={`${w} border-r border-[#c9cfdd] flex items-center justify-center whitespace-nowrap`}>{t}</div>
      ))}
      <div className="w-[168px] border-r border-[#c9cfdd] flex items-center pl-[3px] gap-[3px]">
        <span className="w-[13px] h-[14px] bg-black" />MBS-Driver-Main
      </div>
      {statusToggles.map(([t, w, on]) => (
        <div key={t} className={`${w} shrink-0 border-r border-[#c9cfdd] flex items-center justify-center whitespace-nowrap ${on ? 'font-bold bg-[#e6f2fb]' : ''}`}>{t}</div>
      ))}
      <div className="flex-1 flex items-center pl-[10px] whitespace-nowrap">Record H</div>
    </div>
  </div>
);

// ---- grasshopper ribbon ----
const hexPts = '1,12 6.5,2.5 17.5,2.5 23,12 17.5,21.5 6.5,21.5';

const Hex = ({ children }: { children: React.ReactNode }) => (
  <Svg s={25}>
    <polygon points={hexPts} fill="url(#hex)" stroke="#777" strokeWidth="0.8" />
    {children}
  </Svg>
);

const W = { stroke: '#fff', fill: 'none', strokeWidth: 1.8 };

const Cell = ({ children }: { children?: React.ReactNode }) => (
  <div className="w-[28px] h-[28px] flex items-center justify-center">{children}</div>
);

const Group = ({ cols, children }: { cols: string; children: React.ReactNode }) => (
  <div className={`grid ${cols} auto-rows-[28px] content-start`}>{children}</div>
);

const Divider = () => <div className="w-[10px] flex justify-center py-[4px]"><div className="w-px bg-[#dcdcdc]" /></div>;

const Panel = ({ title, w, h, children }: { title: string; w: string; h: string; children: React.ReactNode }) => (
  <div className={`${w} ${h} flex flex-col rounded-[4px] border border-[#777] bg-linear-to-b from-[#f0f0f0] to-[#dadada] overflow-hidden shrink-0`}>
    <div className="flex-1 min-h-0 flex pl-[1px]">{children}</div>
    <div className="h-[13px] bg-linear-to-b from-[#111] to-[#333] relative flex items-center justify-center text-[10px] tracking-[0.2px] text-[#d8d8d8] pr-[10px] leading-none">
      {title}
      <span className="absolute right-[3px] top-[3px] text-[#aaa] text-[11px] font-bold leading-[9px]">+</span>
    </div>
  </div>
);

const SquareIco = ({ bg, children }: { bg?: string; children?: React.ReactNode }) => (
  <svg width="24" height="24" viewBox="0 0 24 24" className="block">
    <rect x="0.5" y="0.5" width="23" height="23" rx="2.5" fill={bg ?? 'url(#sq)'} stroke="#222" />
    {children}
  </svg>
);

const Ribbon = () => (
  <div className="h-[114px] bg-linear-to-b from-[#cdcdcd] to-[#f0f0f0] pt-[2px] pl-[3px] flex items-start gap-[3px] border-t border-[#b0b0b0] rounded-tr-[6px]">
    <Panel title="Geometry" w="w-[166px]" h="h-[100px]">
      <Group cols="grid-cols-[28px]">
        <Cell><Hex><path d="M8.5 8.5l7 7M15.5 8.5l-7 7" {...W} strokeWidth={2.6} /></Hex></Cell>
        <Cell><Hex><path d="M7 17l9-9M11 7.5h5.5V13" {...W} strokeWidth={2.2} /></Hex></Cell>
        <Cell />
      </Group>
      <Divider />
      <Group cols="grid-cols-[28px_28px]">
        <Cell><Hex><ellipse cx="12" cy="12" rx="7" ry="5" {...W} /></Hex></Cell>
        <Cell><Hex><path d="M8 16l8-8" {...W} /><rect x="6" y="14.5" width="3.5" height="3.5" fill="#222" stroke="#fff" /><rect x="14.5" y="6" width="3.5" height="3.5" fill="#222" stroke="#fff" /></Hex></Cell>
        <Cell><Hex><path d="M6 7c6 0 10 5 11 11" {...W} /><path d="M5 9l3-3M15 18h4" {...W} strokeWidth={1.2} /></Hex></Cell>
        <Cell><Hex><path d="M5 15l3-7h11l-2 7z" fill="#eee" stroke="#fff" /><path d="M8 12l8-1" stroke="#333" /></Hex></Cell>
        <Cell><Hex><ellipse cx="12" cy="12" rx="7" ry="5" {...W} strokeWidth={1} /><ellipse cx="13" cy="12" rx="4" ry="3" {...W} strokeWidth={1} /><ellipse cx="13" cy="12" rx="2" ry="1.5" {...W} strokeWidth={1} /></Hex></Cell>
        <Cell><Hex><path d="M12 5l6 7-6 7-6-7z" {...W} strokeWidth={1.4} /><path d="M6 5l12 14M18 5L6 19" stroke="#bbb" strokeWidth="0.8" /></Hex></Cell>
      </Group>
      <Divider />
      <Group cols="grid-cols-[28px_28px]">
        <Cell><Hex><path d="M7 9l6-3 5 3v7l-5 3-6-3z" fill="#ddd" stroke="#888" /><path d="M7 9l6 3 5-3M13 12v7" stroke="#777" fill="none" /></Hex></Cell>
        <Cell><Hex><path d="M8 6h9v13l-5-3-5 1z" fill="#bbb" stroke="#eee" /><path d="M12 6l1 10" stroke="#555" /></Hex></Cell>
        <Cell><Hex><path d="M8 7l7-2 4 9-7 5-5-4z" fill="#ddd" stroke="#888" /><ellipse cx="15" cy="7" rx="3" ry="2" fill="#777" /></Hex></Cell>
        <Cell />
        <Cell><Hex><path d="M5 12h14M12 5v14M7 7l10 10M17 7L7 17" stroke="#ccc" strokeWidth="0.9" /><path d="M8 8h8v8H8z" fill="none" stroke="#ccc" strokeWidth="0.8" /></Hex></Cell>
        <Cell />
      </Group>
    </Panel>
    <Panel title="Primitive" w="w-[60px]" h="h-[100px]">
      <Group cols="grid-cols-[28px_28px]">
        <Cell><Hex><circle cx="12" cy="12" r="5.5" fill="#fff" /><path d="M12 12l5-3.5 A5.5 5.5 0 0 0 8 8z" fill="#222" /></Hex></Cell>
        <Cell><Hex><text x="12" y="18" textAnchor="middle" fontSize="17" fontWeight="700" fontFamily="Liberation Serif" fill="#fff">A</text></Hex></Cell>
        <Cell><Hex><text x="12" y="19" textAnchor="middle" fontSize="18" fontWeight="700" fontFamily="Liberation Serif" fill="#fff">7</text></Hex></Cell>
        <Cell />
        <Cell><Hex><text x="12" y="17.5" textAnchor="middle" fontSize="13" fontWeight="700" fontFamily="Liberation Serif" fill="#fff">0.1</text></Hex></Cell>
        <Cell />
      </Group>
    </Panel>
    <Panel title="Input" w="w-[137px]" h="h-[100px]">
      <Group cols="grid-cols-[28px]">
        <Cell><SquareIco><path d="M12 5v8M8.5 10l3.5 4 3.5-4" stroke="#222" strokeWidth="2" fill="#222" /><path d="M3 17h18" stroke="#222" strokeWidth="2" strokeDasharray="1 1" /></SquareIco></Cell>
        <Cell><SquareIco bg="#f0b400"><path d="M3 18l3-4 1 3 3-6 1 5 3-7 1 6 3-7 2 5" fill="none" stroke="#8a5a00" strokeWidth="1.3" /></SquareIco></Cell>
        <Cell />
      </Group>
      <Divider />
      <Group cols="grid-cols-[28px_28px]">
        <Cell><SquareIco><rect x="7" y="3" width="10" height="18" rx="1" fill="#555" stroke="#222" /><rect x="8" y="4" width="8" height="8" fill="#222" /></SquareIco></Cell>
        <Cell><SquareIco><rect x="3" y="3" width="18" height="5" fill="#bbb" stroke="#222" /><rect x="3" y="9.5" width="18" height="5" fill="#999" stroke="#222" /><rect x="3" y="16" width="18" height="5" fill="#888" stroke="#222" /></SquareIco></Cell>
        <Cell><svg width="24" height="24" viewBox="0 0 24 24"><circle cx="12" cy="12" r="11.5" fill="#888" stroke="#444" /><circle cx="12" cy="12" r="7" fill="#222" stroke="#aaa" /><path d="M19 12h3" stroke="#222" strokeWidth="2" /></svg></Cell>
        <Cell />
        <Cell><SquareIco><text x="14" y="10" textAnchor="middle" fontSize="10" fontWeight="700" fontFamily="Liberation Serif" fill="#222">7</text><text x="10" y="21" textAnchor="middle" fontSize="11" fontWeight="700" fontFamily="Liberation Serif" fill="#222">5</text></SquareIco></Cell>
        <Cell />
      </Group>
      <Divider />
      <Group cols="grid-cols-[28px]">
        <Cell><SquareIco bg="url(#pink)"><path d="M0 16h24" stroke="#fff" strokeWidth="1.3" /><circle cx="2" cy="16" r="2" fill="#fff" stroke="#222" /><circle cx="16" cy="16" r="2" fill="#fff" stroke="#222" /></SquareIco></Cell>
        <Cell>
          <svg width="24" height="24" viewBox="0 0 24 24">
            <rect x="0.5" y="0.5" width="23" height="23" rx="2.5" fill="#0c0" stroke="#222" />
            <path d="M2 2h6v6H2zM14 2h6v6h-6zM8 8h6v6H8zM20 8h3v6h-3zM2 14h6v6H2zM14 14h6v6h-6z" fill="#0a4a0a" />
            <path d="M20 14h3v8h-3z" fill="#6fe" />
          </svg>
        </Cell>
        <Cell />
      </Group>
    </Panel>
    <Panel title="Util" w="w-[108px]" h="h-[72px]">
      <Group cols="grid-cols-[28px]">
        <Cell><svg width="24" height="24" viewBox="0 0 24 24"><path d="M7 14C9 8 12 5 16 2M16 2C17 8 18 10 18 14" fill="none" stroke="#4a7a20" strokeWidth="1.3" /><path d="M14 3l7 1-4 3z" fill="#4a9a20" /><circle cx="7" cy="17" r="5.5" fill="#d8141c" /><circle cx="18" cy="18" r="5" fill="#d8141c" /></svg></Cell>
        <Cell><SquareIco bg="#bbb"><path d="M12 22V11M12 13L6 7M12 12l6-6M8 9L4 9M9 10L8 4M15 9l5 1M15 9l0-6M12 11V3" stroke="#111" strokeWidth="1.6" fill="none" /><rect x="1" y="20" width="22" height="3" fill="#222" /></SquareIco></Cell>
      </Group>
      <Divider />
      <Group cols="grid-cols-[28px]">
        <Cell><svg width="24" height="24" viewBox="0 0 24 24"><path d="M2 8h11V3l9 9-9 9v-5H2z" fill="#444" stroke="#222" /></svg></Cell>
        <Cell><svg width="24" height="24" viewBox="0 0 24 24"><path d="M2 8h11V3l9 9-9 9v-5H2z" fill="#eee" stroke="#888" /></svg></Cell>
      </Group>
      <Divider />
      <Group cols="grid-cols-[28px]">
        <Cell><svg width="24" height="24" viewBox="0 0 24 24"><circle cx="9" cy="9" r="7" fill="#bbb" stroke="#888" /><circle cx="8" cy="9" r="3" fill="#444" /><circle cx="15" cy="14" r="7" fill="#e8247c" stroke="#a01860" /><ellipse cx="14" cy="12" rx="3" ry="2" fill="#f8a8d0" /></svg></Cell>
        <Cell><svg width="24" height="24" viewBox="0 0 24 24"><path d="M9 2v8L3 21c0 1 1 2 2 2h13c1 0 2-1 2-2L14 10V2z" fill="#fff" stroke="#222" /><path d="M6 15h11l3 6c0 1-1 2-2 2H5c-1 0-2-1-2-2z" fill="#e82c8c" /></svg></Cell>
      </Group>
    </Panel>
  </div>
);

// ---- grasshopper canvas ----
const Grip = ({ pos }: { pos: string }) => (
  <span className={`absolute ${pos} w-[9px] h-[10px] rounded-full bg-white border-2 border-[#111]`} />
);

const ParamNode = ({ pos, label, text }: { pos: string; label: string; text: string }) => (
  <div className={`absolute ${pos}`}>
    <Grip pos="-left-[5px] top-[5px]" />
    <Grip pos="-right-[5px] top-[5px]" />
    <div className={`${serif} ${text} relative h-full rounded-[3px] border border-[#222] bg-linear-to-b from-[#e2e2e6] via-[#a4a4ae] to-[#8c8c9a] flex items-center justify-center text-[#14141c] whitespace-nowrap`}>
      {label}
    </div>
  </div>
);

const YellowPanel = ({ pos, label, head, inset }: { pos: string; label: string; head: string; inset: string }) => (
  <div className={`absolute ${pos} rounded-r-[3px] border border-l-0 border-[#222] flex flex-col bg-[#fffb58]`}>
    <div className={`${serif} ${head} bg-[#cdc94a] border-b border-[#222] text-[12px] text-[#111] leading-[15px] overflow-hidden whitespace-nowrap`}>
      <span className={`block ${inset}`}>{label}</span>
    </div>
    <div className="h-[7px] bg-linear-to-b from-[#c8c440] to-[#fffb58]" />
  </div>
);

const hLines = [273, 323, 373, 423, 473, 523, 573, 623, 673, 723, 773, 823, 873, 923, 973];
const vLines = [1014, 1164, 1315, 1465, 1615, 1765, 1915];

const GhCanvas = () => (
  <div className="relative w-[954px] h-[781px] bg-[#d4d0c8] overflow-hidden">
    <svg width="954" height="781" viewBox="963 227 954 781" className="absolute inset-0">
      {hLines.map((y) => <path key={y} d={`M963 ${y}H1917`} stroke="#b3b0a8" />)}
      {vLines.map((x) => <path key={x} d={`M${x} 227V1008`} stroke="#b3b0a8" />)}
    </svg>

    <div className="absolute left-[365px] top-[112px] w-[248px] h-[247px] bg-[rgba(165,133,253,0.6)] border border-[#9c8db0] flex justify-center pt-[9px]">
      <span className="font-['Liberation_Sans',sans-serif] text-[26px] leading-[30px] tracking-[0.2px] text-[#111] [-webkit-text-stroke:0.3px_#111]">01. Check Surface</span>
    </div>
    <div className="absolute left-[647px] top-[77px] w-[400px] h-[94px] rounded-[24px] bg-[rgba(255,200,255,0.5)] border border-[#b8a4b4] pl-[34px] pt-[28px]">
      <span className="font-['Liberation_Sans',sans-serif] text-[26px] leading-[30px] tracking-[0.2px] text-[#111] [-webkit-text-stroke:0.3px_#111]">02. Get Longest Edge</span>
    </div>
    <div className="absolute left-[662px] top-[179px] w-[110px] h-[81px] rounded-[20px] bg-[rgba(255,200,255,0.5)] border border-[#b8a4b4]" />

    <svg width="954" height="781" viewBox="963 227 954 781" className="absolute inset-0">
      <path d="M1925 402 L1895 402 Q1871 402 1871 426 L1871 458 Q1871 482 1847 482 L1772 482 Q1749 482 1749 506 L1749 562 Q1749 586 1773 586 L1848 586 Q1872 586 1872 562 L1872 542 Q1872 518 1896 518 L1925 518" fill="rgba(255,200,255,0.5)" stroke="#b8a4b4" />
      <path d="M963 446 H1900" stroke="#58544e" strokeWidth="3" fill="none" />
      <path d="M1172 447 C1270 447 1270 546 1367 546" stroke="url(#wireGreen)" strokeWidth="3" fill="none" />
      <path d="M1706 446 C1750 446 1730 524 1777 524" stroke="#58544e" strokeWidth="3" fill="none" />
      <path d="M1845 542 C1885 542 1860 470 1899 470 M1845 544 C1887 544 1862 472 1899 472 M1845 546 C1889 546 1864 474 1899 474" stroke="#6a6268" strokeWidth="1" fill="none" />
      <path d="M1706 448 L1900 454" stroke="#9f9a98" strokeWidth="0.8" fill="none" />
      <path d="M1018 737 H1315" stroke="#58544e" strokeWidth="3" />
      <path d="M1008 909 H1305" stroke="#58544e" strokeWidth="3" />
      <path d="M1425 737 C1600 737 1750 725 1920 708" stroke="#b8b5ad" strokeWidth="1" fill="none" />
      <path d="M1425 737 C1600 737 1750 742 1920 746" stroke="#b8b5ad" strokeWidth="1" fill="none" />
      <path d="M1418 909 H1917" stroke="#b8b5ad" strokeWidth="1" fill="none" />
    </svg>

    <ParamNode pos="left-[32px] top-[210px] w-[50px] h-[20px]" label="MainSrf" text="text-[12px]" />
    <ParamNode pos="left-[157px] top-[210px] w-[50px] h-[20px]" label="MainSrf" text="text-[12px]" />
    <ParamNode pos="left-[691px] top-[210px] w-[50px] h-[20px]" label="MainSrf" text="text-[12px]" />
    <ParamNode pos="left-[354px] top-[499px] w-[106px] h-[21px]" label="Maximum Width(m)" text="text-[11.5px]" />
    <ParamNode pos="left-[344px] top-[671px] w-[108px] h-[21px]" label="Maximum Height(m)" text="text-[11.5px]" />

    <div className="absolute left-[406px] top-[291px] w-[64px] h-[58px]">
      <Grip pos="-left-[5px] top-[23px]" />
      <Grip pos="-right-[5px] top-[23px]" />
      <div className={`${serif} relative h-full rounded-[3px] border border-[#1c3a10] bg-linear-to-b from-[#a6f44a] to-[#7ed836] flex items-center pl-[5px] gap-[4px] text-[12px] text-[#1a2c10]`}>
        <span>S</span>
        <div className="w-[25px] h-[54px] rounded-[3px] border border-[#12240c] bg-linear-to-b from-[#587058] via-[#234a26] to-[#1a3a1c] flex items-center justify-center">
          <span className="[writing-mode:vertical-rl] rotate-180 font-bold text-[13px] text-[#cfeec8] leading-none">Untrim</span>
        </div>
        <span>S</span>
      </div>
    </div>

    <div className="absolute left-[816px] top-[285px] w-[64px] h-[44px]">
      <Grip pos="-left-[5px] top-[7px]" />
      <Grip pos="-left-[5px] top-[27px]" />
      <Grip pos="-right-[5px] top-[7px]" />
      <Grip pos="-right-[5px] top-[27px]" />
      <div className={`${serif} relative h-full rounded-[3px] border border-[#222] bg-linear-to-b from-[#e2e2e6] via-[#a8a8b2] to-[#8e8e9c] flex items-center pl-[5px] gap-[4px] text-[13px] text-[#111]`}>
        <div className="w-[9px] flex flex-col gap-[5px]"><span className="leading-[15px]">C</span><span className="leading-[15px]">L</span></div>
        <div className="w-[24px] h-[40px] rounded-[3px] border border-[#111] bg-linear-to-b from-[#777] via-[#3a3a3a] to-[#2a2a2a] flex items-center justify-center">
          <span className="[writing-mode:vertical-rl] rotate-180 font-bold text-[13px] text-white leading-none">Disc</span>
        </div>
        <div className="flex flex-col gap-[5px]"><span className="leading-[15px]">P</span><span className="leading-[15px]">t</span></div>
      </div>
    </div>

    <div className="absolute left-[938px] top-[204px] w-[40px] h-[58px]">
      <Grip pos="-left-[5px] top-[10px]" />
      <Grip pos="-left-[5px] top-[36px]" />
      <div className={`${serif} relative h-full rounded-[3px] border border-[#222] bg-linear-to-b from-[#e2e2e6] via-[#a8a8b2] to-[#8e8e9c] text-[13px] text-[#111] pl-[5px] flex flex-col pt-[7px] gap-[11px]`}>
        <span className="leading-[15px]">C</span><span className="leading-[15px]">t</span>
      </div>
    </div>

    <YellowPanel pos="left-0 top-[459px] w-[52px] h-[100px]" label="m(m)" head="h-[16px]" inset="-ml-[8px]" />
    <Grip pos="left-[49px] top-[505px]" />
    <YellowPanel pos="left-0 top-[632px] w-[42px] h-[99px]" label="m)" head="h-[15px]" inset="-ml-[3px]" />
    <Grip pos="left-[39px] top-[677px]" />

    <div className="absolute left-0 top-[752px] w-[7px] h-[29px] border-r border-y border-[#222] bg-linear-to-b from-[#e8e8e8] via-[#888] to-[#bbb]" />

    <svg width="48" height="48" viewBox="0 0 48 48" className="absolute left-[899px] top-[725px]">
      <circle cx="24" cy="25" r="20" fill="url(#ball)" stroke="#111" strokeWidth="3" />
      <circle cx="24" cy="25" r="15" fill="#d8d8d8" opacity="0.6" />
      <path d="M9 8 C6 11 4 14 4 17 L2 11 Z" fill="#111" />
    </svg>
  </div>
);

const ghMenu: [string, string][] = [
  ['File', 'w-[37px]'], ['Edit', 'w-[39px]'], ['View', 'w-[44px]'], ['Display', 'w-[57px]'], ['Solution', 'w-[63px]'], ['Help', 'w-[44px]'], ['AutoGraph', 'w-[70px]'],
];
const ghTabs: [string, string][] = [
  ['Maths', 'w-[51px]'], ['Sets', 'w-[44px]'], ['Vector', 'w-[51px]'], ['Curve', 'w-[51px]'], ['Surface', 'w-[60px]'], ['Mesh', 'w-[48px]'], ['Intersect', 'w-[66px]'], ['Transform', 'w-[74px]'],
  ['Display', 'w-[60px]'], ['Wb', 'w-[34px]'], ['Urbano', 'w-[59px]'], ['Kangaroo2', 'w-[77px]'], ['LunchBox', 'w-[75px]'], ['Elefront', 'w-[62px]'], ['gHowl', 'w-[50px]'],
];

const Caret = () => <svg width="6" height="4" viewBox="0 0 6 4"><path d="M0 0h6L3 4z" fill="#222" /></svg>;

const GhToolbar = () => (
  <div className="h-[33px] border-t-2 border-[#8a8a8a] bg-linear-to-b from-white to-[#ececec] flex items-center pl-[3px] pr-[4px]">
    <div className="w-[24px] flex justify-center">
      <svg width="22" height="22" viewBox="0 0 22 22"><path d="M2 21V3h6l2 3h10v15z" fill="#64b044" stroke="#2c5a20" /><path d="M2 21V9h18v12z" fill="#8ccc60" stroke="#2c5a20" /></svg>
    </div>
    <div className="w-[24px] ml-[6px] flex justify-center">
      <svg width="22" height="22" viewBox="0 0 22 22"><rect x="0.5" y="0.5" width="21" height="21" rx="2" fill="#1a5cc0" stroke="#0c2e70" /><rect x="4" y="2" width="14" height="8" fill="#d8e8f8" /><rect x="5" y="13" width="12" height="8" fill="#bbb" /><rect x="7" y="15" width="4" height="5" fill="#1a5cc0" /></svg>
    </div>
    <div className="w-px h-[20px] bg-[#bbb] ml-[8px]" />
    <div className="w-[157px] h-[22px] ml-[4px] border border-[#aaa] bg-white flex items-center justify-between pl-[3px] pr-[7px] text-[12px]">
      100%
      <svg width="9" height="6" viewBox="0 0 9 6"><path d="M0.5 0.5L4.5 5 8.5 0.5" fill="none" stroke="#555" /></svg>
    </div>
    <div className="w-[24px] ml-[5px] flex justify-center">
      <svg width="23" height="22" viewBox="0 0 23 22"><path d="M1 7V1h6M16 1h6v6M22 15v6h-6M7 21H1v-6" fill="none" stroke="#111" strokeWidth="2.6" /><path d="M9 9l5 5M14 9l-5 5" stroke="#111" strokeWidth="1.8" /></svg>
    </div>
    <div className="ml-[7px]"><Caret /></div>
    <div className="w-[24px] ml-[5px] flex justify-center">
      <svg width="23" height="16" viewBox="0 0 23 16"><path d="M1 8C6 0 17 0 22 8 17 16 6 16 1 8z" fill="#fff" stroke="#222" strokeWidth="1.4" /><circle cx="11.5" cy="8" r="5" fill="#2898e0" stroke="#0c4c80" /><circle cx="11.5" cy="8" r="2" fill="#111" /></svg>
    </div>
    <div className="ml-[6px]"><Caret /></div>
    <div className="w-[24px] ml-[4px] flex justify-center">
      <svg width="24" height="24" viewBox="0 0 24 24"><path d="M2 15C4 11 6 22 8 20 11 17 6 14 10 11" fill="none" stroke="#6b1c1c" strokeWidth="1.6" /><path d="M8 18L20 2l3 3L11 21z" fill="#e03828" stroke="#901810" /><path d="M19 3l3 3" stroke="#fff" /></svg>
    </div>
    <div className="flex-1" />
    <Svg s={28}>
      <path d="M6 8l6-4 6 4-1 6H7z" fill="#ddd" stroke="#555" />
      <path d="M3 18c5-6 13-6 18 0-5 6-13 6-18 0z" fill="#333" stroke="#222" />
    </Svg>
    <div className="w-[1px]" />
    <Svg s={28}>
      <path d="M3 14L13 3l8 5-10 12z" fill="#f4f4f4" stroke="#444" />
      <ellipse cx="7" cy="16" rx="3" ry="4" fill="#fff" stroke="#444" />
      <ellipse cx="17" cy="7" rx="3" ry="4" fill="none" stroke="#444" />
    </Svg>
    <div className="w-[29px] h-[28px] border border-[#0a78d0] flex items-center justify-center">
      <Svg s={24}>
        <path d="M2 14L14 3l8 5-11 13z" fill="#c41010" stroke="#601010" />
        <ellipse cx="18" cy="7.5" rx="3" ry="3.6" fill="#7a0808" />
      </Svg>
    </div>
    <div className="w-px h-[22px] bg-[#bbb] ml-[8px] mr-[7px]" />
    <Svg s={28}>
      <path d="M4 14L14 5l8 5-9 11z" fill="#ddd" stroke="#444" />
      <path d="M9 8l5-4 8 5-5 6z" fill="#58b020" stroke="#285010" />
      <ellipse cx="17" cy="8.5" rx="2.5" ry="2" fill="#fff" />
      <path d="M4 5L22 24" stroke="#222" />
    </Svg>
    <Svg s={28}>
      <circle cx="12" cy="12" r="10" fill="#ededed" stroke="#666" />
      <path d="M12 2a10 10 0 0 0 0 20z" fill="#e88a10" stroke="#a85a00" />
    </Svg>
    <div className="w-px h-[22px] bg-[#bbb] ml-[1px] mr-[6px]" />
    <Svg s={24}>
      <path d="M7 2h10l5 5v10l-5 5H7l-5-5V7z" fill="#60b0ee" stroke="#123c80" strokeWidth="1.4" />
    </Svg>
    <div className="ml-[2px] mr-[2px]"><Caret /></div>
  </div>
);

const GhWindow = () => (
  <div className={`${ui} flex-1 h-[1033px] flex flex-col bg-white border-l border-[#6a6a6a] text-[12px] overflow-hidden`}>
    <div className="h-[31px] border-t border-[#777] flex items-center pl-[8px] pt-[1px] text-[#9a9090]">
      <span className="flex-1">Grasshopper - MBS-Panelize-MainRoof</span>
      <svg width="115" height="14" viewBox="0 0 115 14" className="mr-[5px]"><path d="M0 7.5h10" stroke="#777" /><rect x="45.5" y="2.5" width="9" height="9" fill="none" stroke="#777" /><path d="M91 2.5l10 10M101 2.5l-10 10" stroke="#777" /></svg>
    </div>
    <div className="h-[27px] bg-[#f6f6f6] flex items-center pl-[14px] pr-[11px] text-[#0c0c18]">
      {ghMenu.map(([t, w]) => <span key={t} className={w}>{t}</span>)}
      <span className="flex-1" />
      <span>MBS-Panelize-MainRoof</span>
    </div>
    <div className="h-[22px] bg-[#f6f6f6] flex items-end">
      <div className="w-[61px] h-[22px] pb-[2px] bg-[#fbfbfb] border-t border-r border-[#aaa] rounded-t-[4px] text-[#111] flex items-center justify-center tracking-[0.3px]">Params</div>
      <div className="w-[7px]" />
      {ghTabs.map(([t, w]) => (
        <span key={t} className={`${w} h-[21px] pb-[1px] flex items-center text-[#5c5c5c] font-light tracking-[0.2px]`}>{t}</span>
      ))}
    </div>
    <Ribbon />
    <GhToolbar />
    <div className="h-[781px] flex bg-[#c8c8c8]">
      <div className="w-[2px] bg-[#808080]" />
      <GhCanvas />
      <div className="flex-1 bg-[#c8c8c8]" />
    </div>
    <div className="h-[24px] bg-[#f0f0f0] border-t-2 border-white border-b-2 border-b-[#555] flex items-center justify-between pl-[7px] pr-[38px]">
      <span className="text-[#141456] leading-[12px]">...</span>
      <span className="text-[#7a7a7a]">1.0.0007</span>
    </div>
  </div>
);

export default function App() {
  return (
    <div className="relative w-[1920px] h-[1033px] flex overflow-hidden bg-white">
      <Defs />
      <RhinoWindow />
      <GhWindow />
    </div>
  );
}
